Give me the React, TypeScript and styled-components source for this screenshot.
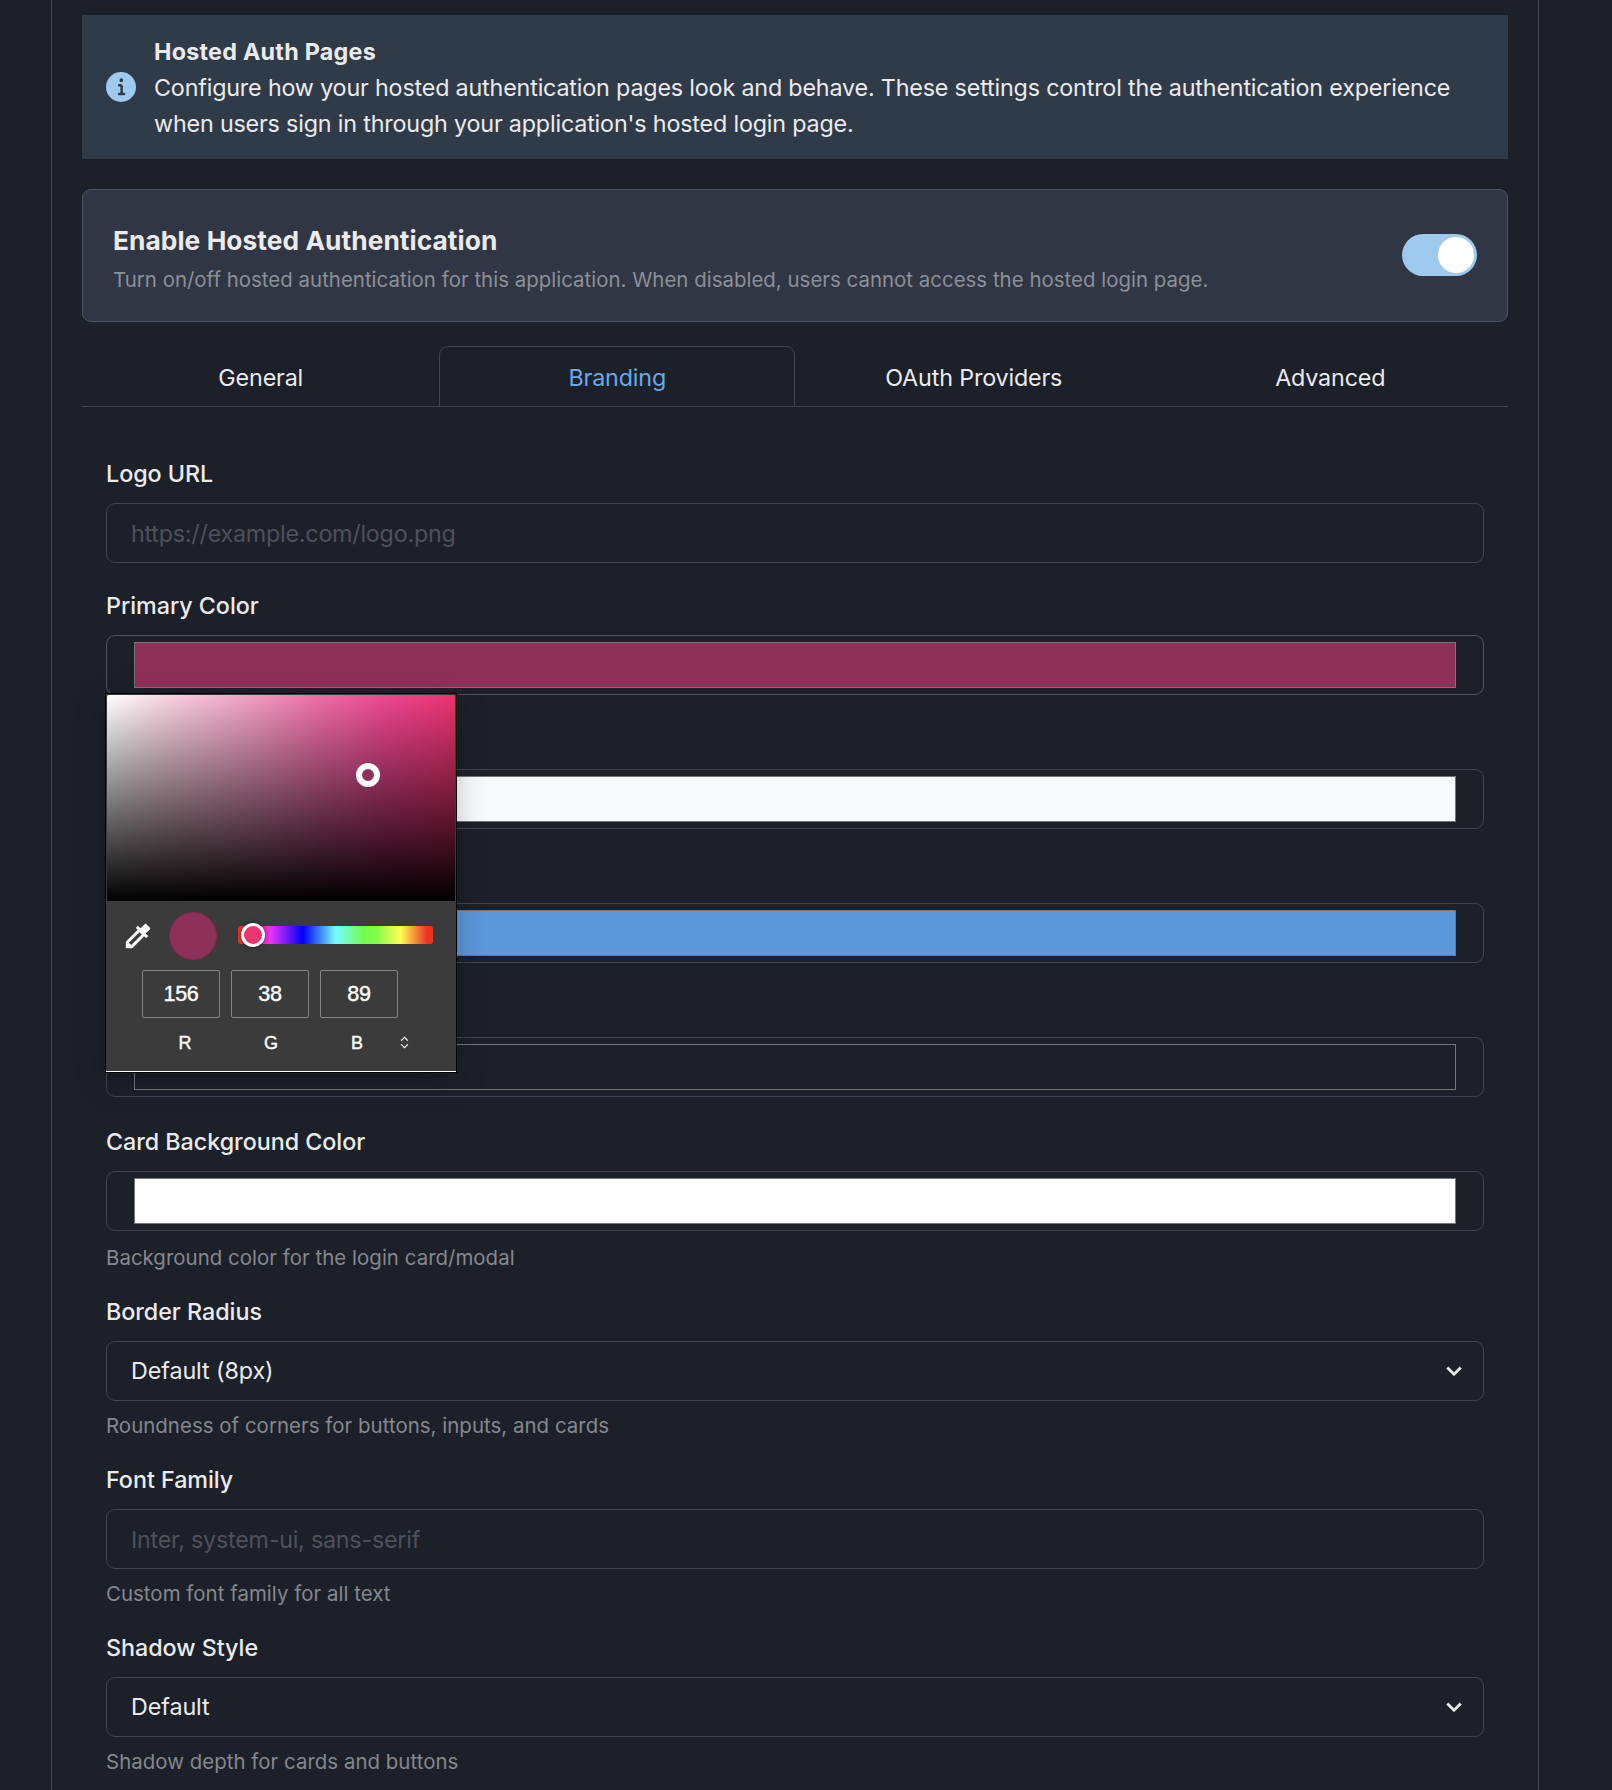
import React from 'react';
import styled, { createGlobalStyle } from 'styled-components';

const color = {
  bg: '#1c2029',
  text: '#ebebec',
  muted: '#85888d',
  placeholder: '#4e515b',
  border: '#40444e',
  borderStrong: '#50545d',
  swatchBorder: '#767676',
  accent: '#9dcaee',
  link: '#6ba9e6',
};

const GlobalStyle = createGlobalStyle`
  *, *::before, *::after { box-sizing: border-box; }
  body {
    margin: 0;
    background: ${color.bg};
    color: ${color.text};
    font-family: Inter, "Liberation Sans", sans-serif;
    font-size: 23.3px;
    line-height: 36px;
    overflow: hidden;
  }
`;

const Page = styled.main`
  height: 1790px;
  overflow: hidden;
  padding: 0 73px 0 51px;
  background: ${color.bg};
`;

const Panel = styled.section`
  display: flex;
  flex-direction: column;
  min-height: 1790px;
  padding: 15px 30px 0;
  border: solid ${color.border};
  border-width: 0 1px;
`;

const Alert = styled.div`
  display: flex;
  align-items: center;
  gap: 18px;
  height: 144px;
  padding: 18px 24px;
  background: #303b4a;
`;

const AlertIcon = styled.svg`
  flex: none;
  width: 30px;
  height: 30px;
  fill: ${color.accent};
`;

const AlertBody = styled.div`
  padding-top: 2px;
`;

const AlertTitle = styled.div`
  font-weight: 700;
  letter-spacing: 0.26px;
`;

const AlertText = styled.div`
  letter-spacing: -0.172px;
  white-space: nowrap;
`;

const EnableCard = styled.div`
  display: flex;
  align-items: flex-start;
  justify-content: space-between;
  height: 133px;
  margin-top: 30px;
  padding: 33px 30px 0;
  border: 1px solid #4c5463;
  border-radius: 9px;
  background: #303644;
`;

const EnableTitle = styled.h2`
  margin: 0 0 5px;
  font-size: 26.3px;
  font-weight: 700;
  line-height: 36px;
  letter-spacing: 0.06px;
`;

const EnableText = styled.p`
  margin: 0;
  color: #8c9098;
  font-size: 20.4px;
  line-height: 31px;
  letter-spacing: 0.03px;
  white-space: nowrap;
`;

const Switch = styled.button`
  display: flex;
  justify-content: flex-end;
  width: 75px;
  height: 42px;
  margin-top: 11px;
  padding: 3px;
  border: 0;
  border-radius: 21px;
  background: ${color.accent};
`;

const Knob = styled.span`
  width: 36px;
  height: 36px;
  border-radius: 50%;
  background: #fff;
`;

const TabList = styled.div`
  display: flex;
  height: 61px;
  margin-top: 24px;
  border-bottom: 1px solid ${color.border};
`;

const Tab = styled.button<{ $active?: boolean }>`
  flex: 1 1 0;
  height: 60px;
  padding: 3px 0 0 1px;
  border: 1px solid ${(p) => (p.$active ? color.border : 'transparent')};
  border-bottom: 0;
  border-radius: 9px 9px 0 0;
  background: none;
  color: ${(p) => (p.$active ? color.link : color.text)};
  font: inherit;
  letter-spacing: -0.15px;
`;

const Form = styled.form`
  display: flex;
  flex-direction: column;
  gap: 24px;
  padding: 48px 24px 0;
`;

const Field = styled.div`
  display: flex;
  flex-direction: column;
  position: relative;
`;

const Label = styled.label`
  min-height: 37px;
  margin-bottom: 11px;
  padding-top: 1px;
  font-weight: 500;
  letter-spacing: -0.03px;
`;

const TextInput = styled.input`
  width: 100%;
  height: 60px;
  padding: 0 24px;
  border: 1px solid ${color.border};
  border-radius: 9px;
  outline: none;
  background: transparent;
  color: ${color.text};
  font: inherit;
  letter-spacing: -0.23px;
  &::placeholder {
    color: ${color.placeholder};
    opacity: 1;
  }
`;

const SelectBox = styled.div`
  display: flex;
  align-items: center;
  justify-content: space-between;
  height: 60px;
  padding: 0 14px 0 24px;
  border: 1px solid ${color.border};
  border-radius: 9px;
  letter-spacing: -0.08px;
`;

const SelectIcon = styled.svg`
  width: 30px;
  height: 30px;
  fill: ${color.text};
  stroke: ${color.text};
  stroke-width: 0.3;
`;

const ColorBox = styled.div<{ $active?: boolean }>`
  height: 60px;
  margin-bottom: 2px;
  padding: 6px 27px;
  border: 1px solid ${(p) => (p.$active ? color.borderStrong : color.border)};
  border-radius: 9px;
`;

const Swatch = styled.div<{ $fill: string }>`
  height: 46px;
  border: 1px solid ${color.swatchBorder};
  background: ${(p) => p.$fill};
`;

const Helper = styled.div`
  height: 23px;
  margin-top: 13px;
  color: ${color.muted};
  font-size: 20.4px;
  line-height: 24px;
  letter-spacing: 0.045px;
`;

/* Popup opened from the primary color control */
const Picker = styled.div`
  position: absolute;
  top: 107px;
  left: 0;
  z-index: 2;
  width: 350px;
  height: 378px;
  padding: 1px 1px 0;
  border-bottom: 1px solid #fff;
  background: #3b3b3b;
  box-shadow: 0 0 0 1px #000, 0 8px 28px rgba(0, 0, 0, 0.25);
  color: #fff;
  font-family: "Liberation Sans", Arial, sans-serif;
`;

const Spectrum = styled.div`
  position: relative;
  height: 206px;
  border-radius: 2px 2px 0 0;
  background:
    linear-gradient(to bottom, transparent, #000),
    linear-gradient(to right, #fff 0%, #f8d3e0 17%, #f19dc1 42%, #ee6ba5 62%, #ed4790 80%, #ec336f 100%);
`;

const SpectrumThumb = styled.span`
  position: absolute;
  top: 68px;
  left: 249px;
  width: 24px;
  height: 24px;
  border: 6px solid #fff;
  border-radius: 50%;
  background: #8f3058;
`;

const PickerRow = styled.div`
  display: flex;
  align-items: center;
  height: 48px;
  margin-top: 11px;
  padding-left: 15px;
`;

const Dropper = styled.svg`
  width: 32px;
  height: 32px;
  fill: #fff;
  stroke: #fff;
  stroke-width: 0.3;
`;

const Current = styled.span`
  width: 48px;
  height: 48px;
  margin: 0 21px 0 15px;
  border: 1px solid #822a4f;
  border-radius: 50%;
  background: #8f3058;
`;

const HueTrack = styled.div`
  position: relative;
  width: 195px;
  height: 18px;
  margin-bottom: 2px;
  border-radius: 3px;
  background: linear-gradient(to right, #eb3323, #ea33f7 16.67%, #0000f5 33.33%, #75fbfd 50%, #75fb4c 65%, #85fb4b 71%, #ffff54 83.33%, #eb3323 97%);
`;

const HueThumb = styled.span`
  position: absolute;
  top: -3px;
  left: 3px;
  width: 24px;
  height: 24px;
  border: 3px solid #fff;
  border-radius: 50%;
  background: #ee3370;
  box-shadow: 0 0 5px rgba(0, 0, 0, 0.5);
`;

const Channels = styled.div`
  display: flex;
  gap: 11px;
  margin-top: 10px;
  padding-left: 35px;
`;

const Channel = styled.div`
  width: 78px;
  height: 48px;
  border: 1px solid #858585;
  border-radius: 2px;
  font-size: 21.6px;
  line-height: 45px;
  letter-spacing: -0.3px;
  text-align: center;
  -webkit-text-stroke: 0.4px #fff;
`;

const ChannelNames = styled.div`
  display: flex;
  align-items: center;
  height: 24px;
  margin-top: 12px;
  padding-left: 35px;
  font-size: 18px;
  line-height: 24px;
  -webkit-text-stroke: 0.4px #fff;
`;

const ChannelName = styled.span`
  width: 86px;
  padding-top: 2px;
  text-align: center;
`;

const Stepper = styled.svg`
  width: 9px;
  height: 13px;
  fill: none;
  stroke: #fff;
  stroke-width: 1.3;
`;

const Chevron = () => (
  <SelectIcon viewBox="0 0 24 24">
    <path d="M16.59 8.59L12 13.17 7.41 8.59 6 10l6 6 6-6z" />
  </SelectIcon>
);

const ColorPicker = () => (
  <Picker>
    <Spectrum>
      <SpectrumThumb />
    </Spectrum>
    <PickerRow>
      <Dropper viewBox="0 0 24 24">
        <path d="M20.71 5.63l-2.34-2.34a.996.996 0 0 0-1.41 0l-3.12 3.12-1.93-1.91-1.41 1.41 1.42 1.42L3 16.25V21h4.75l8.92-8.92 1.42 1.42 1.41-1.41-1.92-1.92 3.12-3.12c.4-.4.4-1.03.01-1.42zM6.92 19L5 17.08l8.06-8.06 1.92 1.92L6.92 19z" />
      </Dropper>
      <Current />
      <HueTrack>
        <HueThumb />
      </HueTrack>
    </PickerRow>
    <Channels>
      {[156, 38, 89].map((value) => (
        <Channel key={value}>{value}</Channel>
      ))}
    </Channels>
    <ChannelNames>
      {['R', 'G', 'B'].map((name) => (
        <ChannelName key={name}>{name}</ChannelName>
      ))}
      <Stepper viewBox="0 0 9 13">
        <path d="M1.2 4.6 4.5 1.3l3.3 3.3M1.2 8.4l3.3 3.3 3.3-3.3" />
      </Stepper>
    </ChannelNames>
  </Picker>
);

const tabs = ['General', 'Branding', 'OAuth Providers', 'Advanced'];

type FieldSpec = {
  kind: 'text' | 'select' | 'color';
  label?: string;
  value: string;
  helper?: string;
  open?: boolean;
};

const fields: FieldSpec[] = [
  { kind: 'text', label: 'Logo URL', value: 'https://example.com/logo.png' },
  { kind: 'color', label: 'Primary Color', value: '#8f3058', open: true },
  { kind: 'color', value: '#f8fafc' },
  { kind: 'color', value: '#5b98dc' },
  { kind: 'color', value: color.bg },
  {
    kind: 'color',
    label: 'Card Background Color',
    value: '#ffffff',
    helper: 'Background color for the login card/modal',
  },
  {
    kind: 'select',
    label: 'Border Radius',
    value: 'Default (8px)',
    helper: 'Roundness of corners for buttons, inputs, and cards',
  },
  {
    kind: 'text',
    label: 'Font Family',
    value: 'Inter, system-ui, sans-serif',
    helper: 'Custom font family for all text',
  },
  {
    kind: 'select',
    label: 'Shadow Style',
    value: 'Default',
    helper: 'Shadow depth for cards and buttons',
  },
];

const FormField = ({ kind, label, value, helper, open }: FieldSpec) => (
  <Field>
    <Label>{label}</Label>
    {kind === 'text' && <TextInput placeholder={value} />}
    {kind === 'select' && (
      <SelectBox>
        <span>{value}</span>
        <Chevron />
      </SelectBox>
    )}
    {kind === 'color' && (
      <ColorBox $active={open}>
        <Swatch $fill={value} />
      </ColorBox>
    )}
    {helper && <Helper>{helper}</Helper>}
    {open && <ColorPicker />}
  </Field>
);

export default function App() {
  return (
    <>
      <GlobalStyle />
      <Page>
        <Panel>
          <Alert>
            <AlertIcon viewBox="0 0 24 24">
              <path d="M12,0A12,12,0,1,0,24,12,12.013,12.013,0,0,0,12,0Zm.25,5a1.5,1.5,0,1,1-1.5,1.5A1.5,1.5,0,0,1,12.25,5ZM14.5,18.5h-4a1,1,0,0,1,0-2h.75a.25.25,0,0,0,.25-.25v-4.5a.25.25,0,0,0-.25-.25H10.5a1,1,0,0,1,0-2h1a2,2,0,0,1,2,2v4.75a.25.25,0,0,0,.25.25h.75a1,1,0,1,1,0,2Z" />
            </AlertIcon>
            <AlertBody>
              <AlertTitle>Hosted Auth Pages</AlertTitle>
              <AlertText>
                Configure how your hosted authentication pages look and behave. These settings control the authentication experience
                <br />
                when users sign in through your application's hosted login page.
              </AlertText>
            </AlertBody>
          </Alert>
          <EnableCard>
            <div>
              <EnableTitle>Enable Hosted Authentication</EnableTitle>
              <EnableText>
                Turn on/off hosted authentication for this application. When disabled, users cannot access the hosted login page.
              </EnableText>
            </div>
            <Switch type="button" role="switch" aria-checked="true">
              <Knob />
            </Switch>
          </EnableCard>
          <TabList>
            {tabs.map((name) => (
              <Tab key={name} type="button" $active={name === 'Branding'}>
                {name}
              </Tab>
            ))}
          </TabList>
          <Form>
            {fields.map((field, i) => (
              <FormField key={i} {...field} />
            ))}
          </Form>
        </Panel>
      </Page>
    </>
  );
}
